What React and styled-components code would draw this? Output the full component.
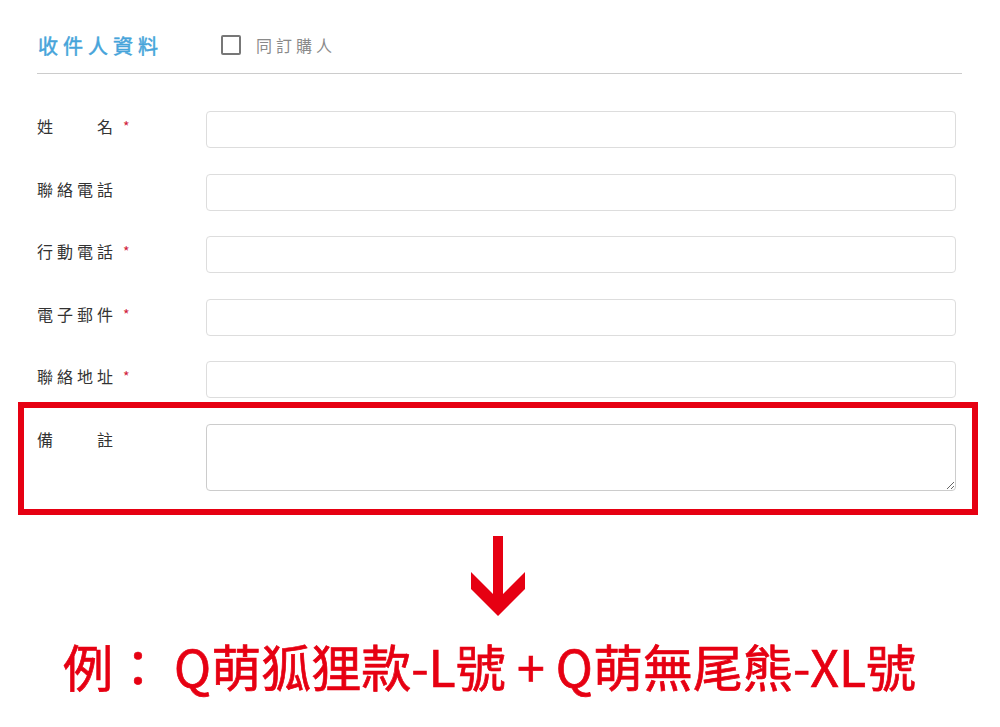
import React from "react";
import styled, { createGlobalStyle } from "styled-components";

const GlobalStyle = createGlobalStyle`
  body {
    margin: 0;
    background: #ffffff;
    font-family: "Noto Sans CJK TC", "Noto Sans", sans-serif;
  }
`;

const RED = "#e60012";

const fields = [
  { label: "姓\u3000\u3000名", required: true },
  { label: "聯絡電話", required: false },
  { label: "行動電話", required: true },
  { label: "電子郵件", required: true },
  { label: "聯絡地址", required: true },
];

const App = () => {
  return (
    <Page>
      <GlobalStyle />
      <Header>
        <Title>收件人資料</Title>
        <SameAs>
          <CheckBox type="checkbox" />
          <span>同訂購人</span>
        </SameAs>
      </Header>
      <Form>
        {fields.map((f) => (
          <Row key={f.label}>
            <Label>
              {f.label}
              {f.required && <Star>*</Star>}
            </Label>
            <Input type="text" />
          </Row>
        ))}
        <Highlight>
          <Row>
            <Label>備{"\u3000\u3000"}註</Label>
            <Remarks />
          </Row>
        </Highlight>
      </Form>
      <Arrow>
        <svg width="60" height="84" viewBox="0 0 60 84">
          <rect x="25" y="2" width="10" height="72" fill={RED} />
          <polygon points="3,38 30,65 57,38 57,55 30,82 3,55" fill={RED} />
        </svg>
      </Arrow>
      <Example>例： Q萌狐狸款-L號 + Q萌無尾熊-XL號</Example>
    </Page>
  );
};

const Page = styled.div`
  width: 1000px;
  height: 727px;
  box-sizing: border-box;
  padding: 28px 38px 0 37px;
  overflow: hidden;
`;

const Header = styled.div`
  display: flex;
  align-items: center;
  height: 34px;
  padding-bottom: 11px;
  border-bottom: 1px solid #cccccc;
`;

const Title = styled.h2`
  margin: 0 0 0 1px;
  width: 183px;
  font-size: 20px;
  font-weight: 400;
  letter-spacing: 5px;
  color: #46a4da;
  -webkit-text-stroke: 0.5px #46a4da;
`;

const SameAs = styled.label`
  display: flex;
  align-items: center;
  gap: 15px;
  font-size: 16px;
  letter-spacing: 4px;
  color: #8a8a8a;
`;

const CheckBox = styled.input`
  appearance: none;
  margin: 0;
  width: 20px;
  height: 20px;
  box-sizing: border-box;
  border: 2px solid #777777;
  border-radius: 2px;
  background: #fff;
`;

const Form = styled.div`
  display: flex;
  flex-direction: column;
  margin-top: 37px;
  padding-right: 6px;
`;

const Row = styled.div`
  display: grid;
  grid-template-columns: 169px 1fr;
  align-items: start;
  & + & {
    margin-top: 25.6px;
  }
`;

const Label = styled.div`
  padding-top: 6px;
  font-size: 16px;
  line-height: 18px;
  letter-spacing: 4px;
  color: #333333;
  white-space: pre;
`;

const Star = styled.span`
  margin-left: 6px;
  font-size: 14px;
  color: #d0203a;
  vertical-align: 1px;
`;

const Input = styled.input`
  height: 37px;
  box-sizing: border-box;
  border: 1px solid #dddddd;
  border-radius: 4px;
  padding: 0 10px;
  font-size: 15px;
  outline: none;
`;

const Remarks = styled.textarea`
  height: 67px;
  box-sizing: border-box;
  border: 1px solid #cccccc;
  border-radius: 4px;
  padding: 6px 10px;
  font-size: 15px;
  resize: vertical;
  outline: none;
`;

const Highlight = styled.div`
  margin: 4px -22px 0 -19px;
  padding: 16px 16px 18px 13px;
  border: 6px solid ${RED};
`;

const Arrow = styled.div`
  display: flex;
  justify-content: center;
  margin-top: 19px;
  padding-right: 3px;
  svg {
    display: block;
  }
`;

const Example = styled.div`
  margin-top: 17px;
  padding-right: 20px;
  text-align: center;
  font-size: 50px;
  font-weight: 400;
  line-height: 1.2;
  color: ${RED};
  -webkit-text-stroke: 0.7px ${RED};
  white-space: nowrap;
`;

export default App;
